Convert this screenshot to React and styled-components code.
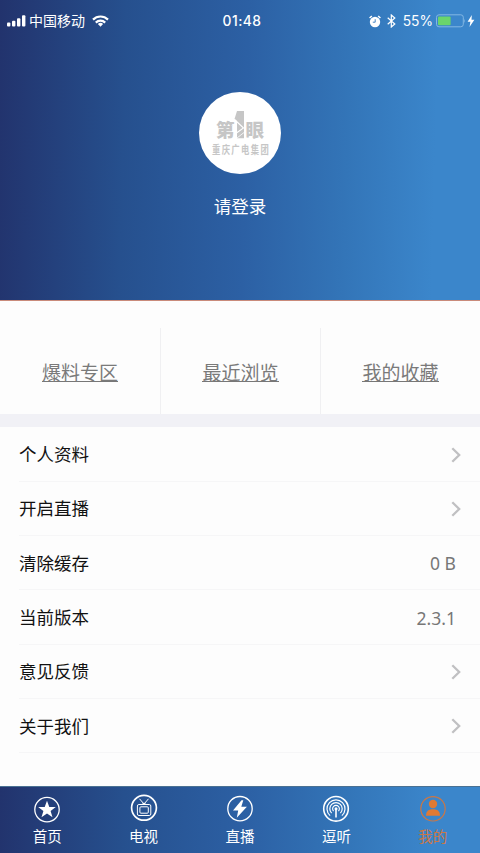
import React from 'react';
import styled, { createGlobalStyle } from 'styled-components';

const blue = 'linear-gradient(91.5deg, #22336d 0%, #26508e 26%, #2c60a4 51%, #3375b8 72%, #3b86cb 90%, #3b86cb 100%)';

const GlobalStyle = createGlobalStyle`
* {
  box-sizing: border-box;
}
body {
  margin: 0;
  background: #fdfdfd;
  font-family: "Noto Sans CJK SC", sans-serif;
}
`;
const Page = styled.div`
width: 480px;
height: 853px;
display: flex;
flex-direction: column;
overflow: hidden;
background: #fdfdfd;
`;
const Header = styled.header`
height: 301px;
flex: none;
display: flex;
flex-direction: column;
align-items: center;
background: ${blue};
border-bottom: 1px solid #c98b7b;
color: #fff;
`;
const StatusBar = styled.div`
width: 100%;
height: 42px;
padding: 0 5px 0 7px;
display: grid;
grid-template-columns: 1fr auto 1fr;
align-items: center;
`;
const StatusGroup = styled.div`
display: flex;
align-items: center;
justify-content: ${(p) => (p.$end ? 'flex-end' : 'flex-start')};
`;
const Carrier = styled.span`
margin: -2px 7px 0 3px;
font-size: 14px;
line-height: 20px;
`;
const Time = styled.span`
padding-left: 2px;
font-family: Inter, sans-serif;
font-weight: 500;
font-size: 13.8px;
letter-spacing: 0.45px;
line-height: 20px;
`;
const Percent = styled.span`
margin: 0 3px 0 7px;
font-family: Inter, sans-serif;
font-size: 13.8px;
letter-spacing: 0;
line-height: 20px;
`;
const Avatar = styled.div`
width: 82px;
height: 82px;
margin-top: 50px;
border-radius: 50%;
background: #fff;
`;
const LoginText = styled.div`
margin-top: 19px;
font-size: 17.5px;
line-height: 26px;
`;
const Shortcuts = styled.div`
height: 126px;
flex: none;
display: grid;
grid-template-columns: 161px 160px 159px;
padding-top: 27px;
border-bottom: 13px solid #f1f1f6;
`;
const Shortcut = styled.div`
display: flex;
justify-content: center;
padding-top: 30px;
border-right: 1px solid #f0f0f2;
font-size: 19px;
line-height: 28px;
color: #7a7a7a;
&:last-child {
  border-right: none;
}
`;
const Underlined = styled.span`
height: 24px;
border-bottom: 1px solid #777;
`;
const List = styled.div`
flex: 1;
padding: 0.4px 0 0 19px;
`;
const Row = styled.div`
height: 54.35px;
padding: 1px 19px 0 0;
display: flex;
align-items: center;
justify-content: space-between;
border-bottom: 1px solid #f6f6f7;
font-size: 17.5px;
line-height: 26px;
color: #111;
`;
const Label = styled.span`
margin-top: -1px;
`;
const Value = styled.span`
padding-right: 5px;
font-family: "Noto Sans", sans-serif;
font-size: 17.5px;
color: #777;
`;
const TabBar = styled.nav`
height: 67px;
flex: none;
margin: 0 -1px;
display: grid;
grid-template-columns: repeat(5, 1fr);
background: ${blue};
border-top: 1px solid #4a7193;
`;
const Tab = styled.div`
display: flex;
flex-direction: column;
align-items: center;
padding-top: 8px;
font-size: 14.5px;
line-height: 22px;
color: ${(p) => (p.$active ? '#cc7745' : '#fff')};
`;
const TabIcon = styled.svg`
width: 28px;
height: 28px;
margin-bottom: 2px;
fill: none;
stroke: currentColor;
overflow: visible;
`;

function Signal() {
  return (
    <svg width="19" height="12" viewBox="0 0 19 12" fill="#fff">
      <rect x="0" y="7.5" width="3.4" height="4" rx="1" />
      <rect x="5" y="5.8" width="3.4" height="5.7" rx="1" />
      <rect x="10" y="3.3" width="3.4" height="8.2" rx="1" />
      <rect x="15" y="0.3" width="3.4" height="11.2" rx="1" />
    </svg>
  );
}

function Wifi() {
  return (
    <svg width="17" height="12" viewBox="0 0 17 12" fill="none" stroke="#fff" strokeWidth="2.2">
      <path d="M1 4.6A10.6 10.6 0 0 1 16 4.6" />
      <path d="M3.8 7.6A6.7 6.7 0 0 1 13.2 7.6" />
      <path d="M8.5 11.7L5.9 9.1A3.7 3.7 0 0 1 11.1 9.1Z" fill="#fff" stroke="none" />
    </svg>
  );
}

function Alarm() {
  return (
    <svg width="12" height="13" viewBox="0 0 12 13" fill="#fff">
      <circle cx="6" cy="7" r="5.2" />
      <path d="M0.6 3L2.8 1M11.4 3L9.2 1" stroke="#fff" strokeWidth="1.5" />
      <path d="M6.2 4.2V7.2H3.8" stroke="#3478bb" strokeWidth="0.9" fill="none" />
    </svg>
  );
}

function Bluetooth() {
  return (
    <svg width="9" height="14" viewBox="0 0 9 14" fill="none" stroke="#fff" strokeWidth="1.2">
      <path d="M0.7 3.8L7.8 10L4.3 13V1L7.8 4L0.7 10.2" />
    </svg>
  );
}

function Battery() {
  return (
    <svg width="31" height="14" viewBox="0 0 31 14">
      <rect x="-0.1" y="0.8" width="26.8" height="12" rx="2.5" fill="none" stroke="#83b7e3" transform="translate(0.6 0)" />
      <rect x="2" y="2.4" width="12.6" height="8.8" rx="1" fill="#6ad56c" />
      <path d="M28.3 4.7Q30 6.8 28.3 8.9Z" fill="#83b7e3" />
    </svg>
  );
}

function Charging() {
  return (
    <svg width="8" height="12" viewBox="0 0 8 12" fill="#fff">
      <path d="M4.8 0L0.6 6.8H3.4L2.5 12L7.4 4.8H4.5Z" />
    </svg>
  );
}

function Logo() {
  return (
    <svg width="82" height="82" viewBox="0 0 82 82" fill="#c6c6c6" fontFamily="Noto Sans CJK SC, sans-serif">
      <text x="17" y="44.6" fontSize="18.5" fontWeight="900">第</text>
      <text x="46.5" y="44.6" fontSize="18.5" fontWeight="900">眼</text>
      <path d="M38 19H45V46.3H38V29L35.5 27Z" />
      <path d="M35.5 27.5L44.5 36L36 42" fill="none" stroke="#fff" strokeWidth="1.1" />
      <path d="M38 46L45 40.5" stroke="#fff" strokeWidth="0.8" />
      <text x="16.2" y="58.6" fontSize="10.4" fontWeight="700" textLength="71" lengthAdjust="spacing" transform="scale(0.8 1.05)">重庆广电集团</text>
    </svg>
  );
}

function Chevron() {
  return (
    <svg width="10" height="16" viewBox="0 0 10 16" fill="none" stroke="#c0c0c2" strokeWidth="2.3">
      <path d="M1.3 1.2L8.2 8L1.3 14.8" />
    </svg>
  );
}

function HomeIcon() {
  return (
    <TabIcon viewBox="0 0 28 28">
      <circle cx="14" cy="14.6" r="12.2" strokeWidth="1.3" />
      <path d="M14 5.8L16.3 12H22.8L17.6 16L19.5 22.2L14 18.5L8.5 22.2L10.4 16L5.2 12H11.7Z" fill="currentColor" stroke="none" />
    </TabIcon>
  );
}

function TvIcon() {
  return (
    <TabIcon viewBox="0 0 28 28">
      <circle cx="14" cy="12.8" r="12.4" strokeWidth="1.7" />
      <path d="M9.5 3.8L14 9L18.5 3.8M11.7 9.5Q14 6.7 16.3 9.5" strokeWidth="1" />
      <rect x="7.4" y="9.5" width="13.4" height="11" rx="1.5" strokeWidth="1" />
      <rect x="9.9" y="11.8" width="8.4" height="6.4" rx="1" strokeWidth="1" />
    </TabIcon>
  );
}

function LiveIcon() {
  return (
    <TabIcon viewBox="0 0 28 28">
      <circle cx="14" cy="13.7" r="12.2" strokeWidth="1.3" />
      <path d="M15.5 5.2L7 15.4H12.2L10.8 22.7L20.9 11.8H15.3L17.3 5.2Z" fill="currentColor" stroke="none" />
    </TabIcon>
  );
}

function PodcastIcon() {
  return (
    <TabIcon viewBox="0 0 28 28">
      <circle cx="14" cy="13.8" r="12.3" strokeWidth="1.6" />
      <path d="M8.1 20.6A9 9 0 1 1 19.9 20.6" strokeWidth="1.2" />
      <path d="M9.6 18.2A6.2 6.2 0 1 1 18.4 18.2" strokeWidth="1.2" />
      <path d="M11.6 16.2A3.4 3.4 0 1 1 16.4 16.2" strokeWidth="1.1" />
      <circle cx="14" cy="13.7" r="1.5" fill="currentColor" stroke="none" />
      <path d="M14 14V22.5" strokeWidth="1.6" />
    </TabIcon>
  );
}

function MineIcon() {
  return (
    <TabIcon viewBox="0 0 28 28">
      <circle cx="14" cy="13.8" r="12.2" strokeWidth="1.2" />
      <circle cx="14" cy="9" r="4.2" fill="#e07a35" stroke="none" />
      <path d="M7 20.7C7 16.2 9.5 14.2 14 14.2S21 16.2 21 20.7Z" fill="#e07a35" stroke="none" />
    </TabIcon>
  );
}

const shortcuts = ['爆料专区', '最近浏览', '我的收藏'];

const rows = [
  { label: '个人资料' },
  { label: '开启直播' },
  { label: '清除缓存', value: '0 B' },
  { label: '当前版本', value: '2.3.1' },
  { label: '意见反馈' },
  { label: '关于我们' },
];

const tabs = [
  { label: '首页', Icon: HomeIcon },
  { label: '电视', Icon: TvIcon },
  { label: '直播', Icon: LiveIcon },
  { label: '逗听', Icon: PodcastIcon },
  { label: '我的', Icon: MineIcon, active: true },
];

export default function App() {
  return (
    <Page>
      <GlobalStyle />
      <Header>
        <StatusBar>
          <StatusGroup>
            <Signal />
            <Carrier>中国移动</Carrier>
            <Wifi />
          </StatusGroup>
          <Time>01:48</Time>
          <StatusGroup $end>
            <Alarm />
            <svg width="6" height="1" />
            <Bluetooth />
            <Percent>55%</Percent>
            <Battery />
            <Charging />
          </StatusGroup>
        </StatusBar>
        <Avatar><Logo /></Avatar>
        <LoginText>请登录</LoginText>
      </Header>
      <Shortcuts>
        {shortcuts.map((label) => (
          <Shortcut key={label}><Underlined>{label}</Underlined></Shortcut>
        ))}
      </Shortcuts>
      <List>
        {rows.map(({ label, value }) => (
          <Row key={label}>
            <Label>{label}</Label>
            {value ? <Value>{value}</Value> : <Chevron />}
          </Row>
        ))}
      </List>
      <TabBar>
        {tabs.map(({ label, Icon, active }) => (
          <Tab key={label} $active={active}>
            <Icon />
            {label}
          </Tab>
        ))}
      </TabBar>
    </Page>
  );
}
